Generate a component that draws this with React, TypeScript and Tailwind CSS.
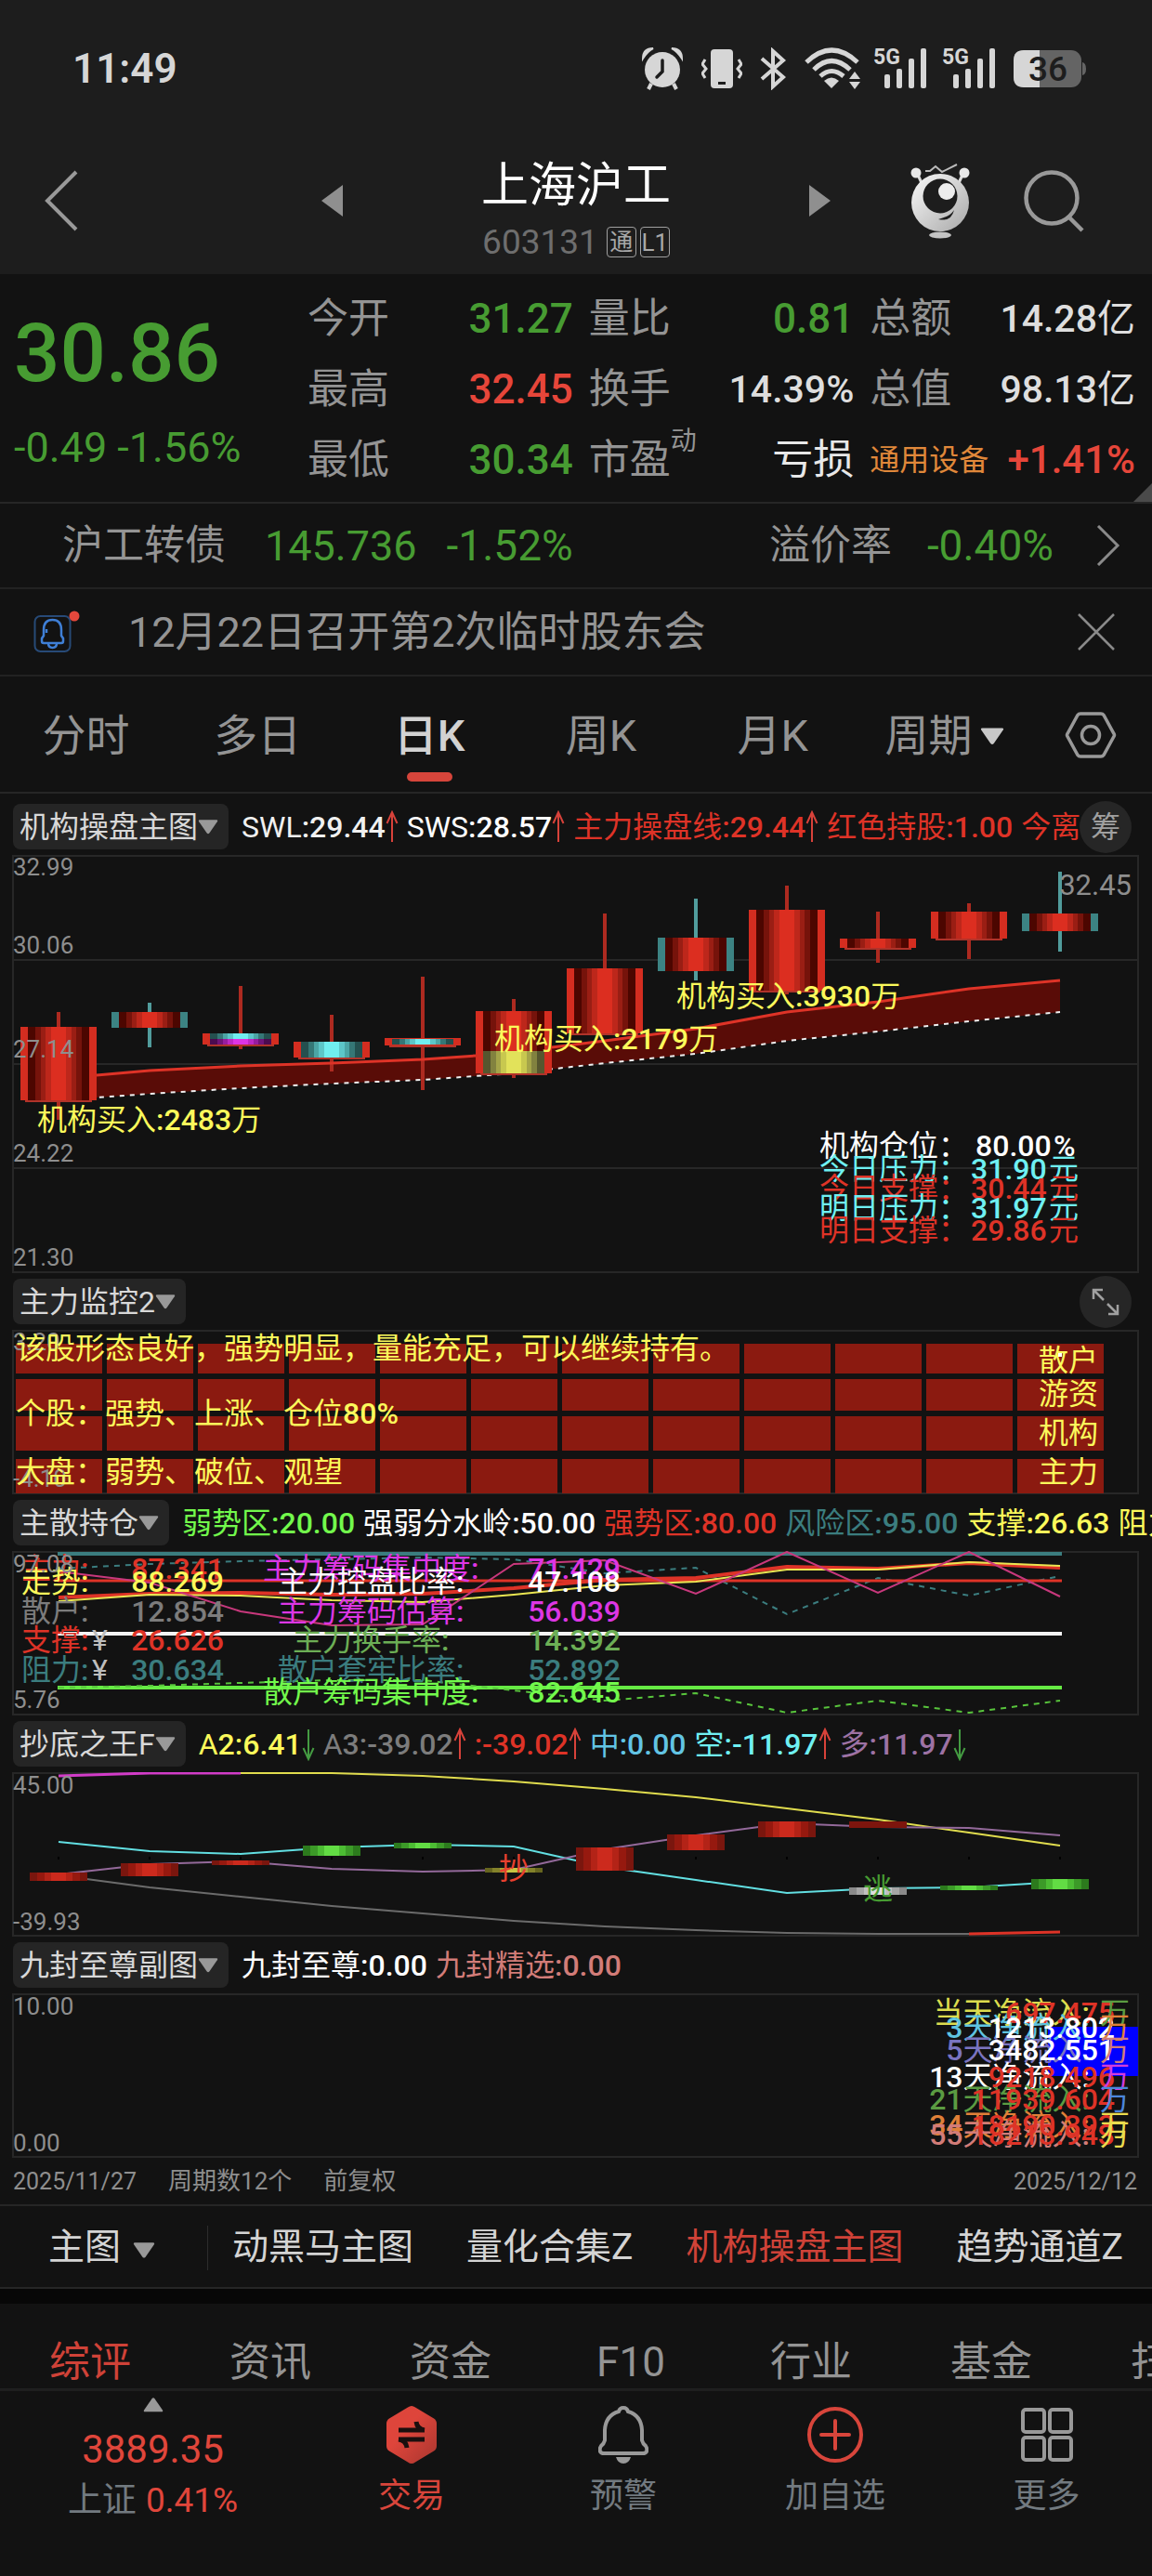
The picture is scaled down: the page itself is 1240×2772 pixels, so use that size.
import React from "react";

const GRAY = "#8e8e8e";
const RED = "#de3327";
const CYAN = "#6ff0f2";
const TEAL = "#3b7d7f";
const YELLOW = "#fbf95b";

const STEP = 98;
const colX = (i: number) => 63 + STEP * i;
const line = (ys: number[], from = 0) => ys.map((y, i) => `${colX(i + from)},${y}`).join(" ");
const split = (s: string) => s.split(/([0-9.:%-]+)/).filter(Boolean);
const isNumeric = (s: string) => /^[0-9.:%-]/.test(s);

function Triangle({ className, size = 22 }: { className?: string; size?: number }) {
  return (
    <svg width={size} height={(size * 3) / 4} viewBox="0 0 22 16" className={className} aria-hidden="true">
      <path d="M2 1h18q2 0 .8 2l-8.300 12q-1.500 1.800-3 0L1.200 3Q0 1 2 1z" fill="currentColor" />
    </svg>
  );
}

function Trend({ down = false }: { down?: boolean }) {
  return (
    <svg width="14" height="36" viewBox="0 0 14 36" className={down ? "rotate-180" : ""} aria-hidden="true">
      <path d="M7 2v32M1.500 14 7 2l5.500 12" fill="none" stroke={down ? "#449c42" : "#d8423a"} strokeWidth="2" />
    </svg>
  );
}

function StatusBar() {
  return (
    <div className="flex h-[148px] items-center justify-between pl-[78px] pr-[71px] text-[#d6d6d6]">
      <span className="text-[44px] font-semibold leading-none">11:49</span>
      <div className="flex items-center">
        <svg width="44" height="46" viewBox="0 0 44 46" fill="#d6d6d6" aria-label="闹钟">
          <path d="M1 12Q1 1 12 1Q6 4 1 12zM43 12Q43 1 32 1Q38 4 43 12z" stroke="#d6d6d6" strokeWidth="2" />
          <circle cx="22" cy="24" r="19" />
          <path d="M10 39 7 45M34 39l3 6" stroke="#d6d6d6" strokeWidth="4" />
          <path d="M22 14v12l-6 6" fill="none" stroke="#1d1d1d" strokeWidth="3.500" strokeLinecap="round" />
        </svg>
        <svg width="44" height="46" viewBox="0 0 44 46" className="ml-[20px]" fill="#d6d6d6" aria-label="振动">
          <rect x="10" y="2" width="24" height="42" rx="4" />
          <rect x="18" y="37" width="8" height="3" fill="#1d1d1d" />
          <path d="M4 13 1 18l4 5-4 5 3 5M40 13l3 5-4 5 4 5-3 5" fill="none" stroke="#d6d6d6" strokeWidth="3" />
        </svg>
        <svg width="30" height="46" viewBox="0 0 30 46" className="ml-[18px]" fill="none" stroke="#d6d6d6" strokeWidth="4" aria-label="蓝牙">
          <path d="M3 12 26 32 15 42V4l11 10L3 34" />
        </svg>
        <svg width="62" height="46" viewBox="0 0 62 46" className="ml-[18px]" aria-label="无线网络">
          <g fill="none" stroke="#d6d6d6" strokeWidth="5">
            <path d="M3 16Q30-10 58 16" />
            <path d="M11 24Q30 5 50 24" />
            <path d="M18 31Q30 20 43 31" />
          </g>
          <path d="M22 36q8-7 16 0l-8 8z" fill="#d6d6d6" />
          <path d="M49 34l6-8 6 8zM49 37l6 8 6-8z" fill="#d6d6d6" />
        </svg>
        {[0, 1].map((k) => (
          <svg key={k} width="60" height="46" viewBox="0 0 60 46" className="ml-[14px] overflow-visible" fill="#d6d6d6" aria-label="5G 信号">
            <text x="-1" y="18" fontSize="23" fontWeight="700">5G</text>
            <rect x="11" y="29" width="6" height="15" rx="2" />
            <rect x="24" y="23" width="6" height="21" rx="2" />
            <rect x="37" y="12" width="6" height="32" rx="2" />
            <rect x="50" y="1" width="6" height="43" rx="2" />
          </svg>
        ))}
        <svg width="78" height="42" viewBox="0 0 78 42" className="ml-[16px]" aria-label="电量 36%">
          <rect x="0" y="1" width="73" height="40" rx="11" fill="#646464" />
          <path d="M11 1h17v40H11Q0 41 0 30V12Q0 1 11 1z" fill="#d6d6d6" />
          <path d="M74 14q4 1 4 7t-4 7z" fill="#646464" />
          <text x="37" y="34" fontSize="37" fontWeight="500" textAnchor="middle" fill="#1d1d1d">36</text>
        </svg>
      </div>
    </div>
  );
}

function TitleBar() {
  return (
    <div className="flex h-[147px] items-center pb-[12px]">
      <div className="flex-1">
        <button aria-label="返回" className="ml-[46px] block">
          <svg width="40" height="68" viewBox="0 0 40 68" fill="none" stroke="#999" strokeWidth="4">
            <path d="M36 3 5 34l31 31" />
          </svg>
        </button>
      </div>
      <div className="flex w-[548px] items-center justify-between">
        <button aria-label="上一只" className="text-[#8f8f8f]">
          <svg width="23" height="34" viewBox="0 0 23 34"><path d="M23 0v34L0 17z" fill="currentColor" /></svg>
        </button>
        <div className="flex flex-col items-center gap-[20px] pt-[22px]">
          <h1 className="text-[51px] font-normal leading-[48px] text-white">上海沪工</h1>
          <div className="flex items-center text-[#6e6e6e]">
            <span className="text-[37px] leading-[34px]">603131</span>
            <span className="ml-[9px] flex h-[33px] w-[32px] items-center justify-center rounded-sm border border-[#a0a0a0] text-[25px] leading-none text-[#a8a8a8]">通</span>
            <span className="ml-[4px] flex h-[33px] w-[32px] items-center justify-center rounded-sm border border-[#a0a0a0] text-[26px] leading-none text-[#a8a8a8]">L1</span>
          </div>
        </div>
        <button aria-label="下一只" className="text-[#8f8f8f]">
          <svg width="23" height="34" viewBox="0 0 23 34"><path d="M0 0v34l23-17z" fill="currentColor" /></svg>
        </button>
      </div>
      <div className="flex flex-1 items-center justify-end gap-[56px]">
        <button aria-label="智能助手">
          <svg width="66" height="82" viewBox="0 0 66 82">
            <defs>
              <linearGradient id="bot" x1="0" y1="0" x2="1" y2="1">
                <stop offset="0" stopColor="#fafafa" />
                <stop offset="1" stopColor="#a8a8a8" />
              </linearGradient>
            </defs>
            <path d="M8 11l6 13M58 11l-6 13" stroke="#ddd" strokeWidth="3" />
            <circle cx="7" cy="11" r="5.500" fill="#e8e8e8" />
            <circle cx="59" cy="11" r="5.500" fill="#e8e8e8" />
            <path d="M17 9h5l6-5 7 6L51 2" fill="none" stroke="#bbb" strokeWidth="2" />
            <circle cx="33" cy="43" r="31" fill="url(#bot)" />
            <circle cx="33" cy="36" r="18.500" fill="#1d1d1d" />
            <circle cx="40" cy="31" r="9" fill="#ececec" />
            <path d="M31 61q14 3 17-10-4 6-11 8z" fill="#1d1d1d" />
            <ellipse cx="33" cy="78" rx="12" ry="3.500" fill="#c4c4c4" />
          </svg>
        </button>
        <button aria-label="搜索" className="mr-[73px]">
          <svg width="66" height="68" viewBox="0 0 66 68" fill="none" stroke="#999" strokeWidth="4.500">
            <circle cx="31" cy="31" r="27.500" />
            <path d="M49 51l15 15" />
          </svg>
        </button>
      </div>
    </div>
  );
}

function Quote({ label, sup, value, className }: { label: string; sup?: string; value: string; className: string }) {
  return (
    <div className="flex items-center justify-between leading-none">
      <dt className="flex items-start text-[44px] text-[#949494]">
        {label}
        {sup && <span className="-mt-3 text-[28px] leading-none">{sup}</span>}
      </dt>
      <dd className={className}>
        {split(value).map((s, i) => <span key={i} className={isNumeric(s) ? "font-medium" : "font-normal"}>{s}</span>)}
      </dd>
    </div>
  );
}

function QuotePanel() {
  const green = "text-[44px] text-[#479c32]";
  const white = "text-[41px] text-[#dedede]";
  return (
    <section className="relative flex border-b-2 border-[#262626] pb-[7px] pt-[10px]">
      <div className="flex w-[331px] shrink-0 flex-col pl-[15px] text-[#479c32]">
        <div className="mt-[33px] text-[87px] font-medium leading-[84px]">30.86</div>
        <div className="mt-[38px] whitespace-nowrap text-[45px] leading-[44px]">-0.49 -1.56%</div>
      </div>
      <dl className="mr-[18px] grid flex-1 auto-rows-[76px] grid-cols-3 gap-x-[17px]">
        <Quote label="今开" value="31.27" className={green} />
        <Quote label="量比" value="0.81" className={green} />
        <Quote label="总额" value="14.28亿" className={white} />
        <Quote label="最高" value="32.45" className="text-[44px] text-[#e6463a]" />
        <Quote label="换手" value="14.39%" className={white} />
        <Quote label="总值" value="98.13亿" className={white} />
        <Quote label="最低" value="30.34" className={green} />
        <Quote label="市盈" sup="动" value="亏损" className="text-[44px] text-[#e8e8e8]" />
        <div className="flex items-center justify-between leading-none">
          <dt className="text-[32px] text-[#e0883a]">通用设备</dt>
          <dd className="text-[42px] font-medium text-[#e6463a]">+1.41%</dd>
        </div>
      </dl>
      <svg width="20" height="20" viewBox="0 0 20 20" className="absolute bottom-0 right-0" aria-hidden="true">
        <path d="M20 0v20H0z" fill="#4a4a4a" />
      </svg>
    </section>
  );
}

function InfoRows() {
  return (
    <>
      <a href="#bond" className="flex h-[92px] items-center border-b-2 border-[#222] pl-[67px] pr-[34px] text-[44px] leading-none text-[#949494]">
        <span>沪工转债</span>
        <span className="ml-[42px] text-[45px] text-[#479c32]">145.736</span>
        <span className="ml-[32px] text-[46px] text-[#479c32]">-1.52%</span>
        <span className="ml-auto">溢价率</span>
        <span className="ml-[38px] text-[46px] text-[#479c32]">-0.40%</span>
        <svg width="26" height="44" viewBox="0 0 26 44" fill="none" stroke="#8a8a8a" strokeWidth="3" className="ml-[46px]" aria-hidden="true">
          <path d="M2 1l21 21L2 43" />
        </svg>
      </a>
      <div className="flex h-[94px] items-center border-b-2 border-[#222] pl-[36px] pr-[40px]">
        <svg width="52" height="46" viewBox="0 0 52 46" fill="none" aria-hidden="true">
          <rect x="1.500" y="6" width="38" height="38" rx="6" stroke="#274a77" strokeWidth="2" />
          <g stroke="#3f7fd6" strokeWidth="2.500">
            <path d="M9 33v-3l2-3V21q0-11 9.500-11T30 21v6l2 3v3q0 2-2 2H11q-2 0-2-2z" />
            <path d="M14 24v-4M16 35q0 5 4.500 5t4.500-5" />
          </g>
          <circle cx="44" cy="6" r="5.500" fill="#e5483c" />
        </svg>
        <span className="ml-[50px] text-[45px] leading-none text-[#949494]">12月22日召开第2次临时股东会</span>
        <button aria-label="关闭" className="ml-auto">
          <svg width="40" height="42" viewBox="0 0 40 42" stroke="#8a8a8a" strokeWidth="2.500"><path d="M1 2l38 38M39 2 1 40" /></svg>
        </button>
      </div>
    </>
  );
}

function PeriodTabs() {
  const tabs = ["分时", "多日", "日K", "周K", "月K", "周期"];
  return (
    <nav className="flex h-[126px] border-b-2 border-[#262626] text-[47px] leading-none">
      {tabs.map((t) => (
        <button
          key={t}
          className={
            t === "日K"
              ? "flex flex-1 flex-col items-center pt-[37px] text-[#d2d2d2] font-medium"
              : "flex flex-1 flex-col items-center pt-[37px] text-[#949494]"
          }
        >
          <span className="flex items-center whitespace-nowrap leading-[54px]">
            {t}
            {t === "周期" && <Triangle size={26} className="ml-[8px] text-[#c8c8c8]" />}
          </span>
          {t === "日K" && <span className="mt-[12px] h-[10px] w-[49px] rounded-full bg-[#d6453b]" />}
        </button>
      ))}
      <button aria-label="设置" className="flex w-[131px] justify-center pt-[38px]">
        <svg width="56" height="50" viewBox="0 0 56 50" fill="none" stroke="#999" strokeWidth="3.500">
          <path d="M17 2h22q2 0 3 1.500l11 20q1 1.500 0 3l-11 20Q41 48 39 48H17q-2 0-3-1.500l-11-20q-1-1.500 0-3l11-20Q15 2 17 2z" />
          <circle cx="28" cy="25" r="9.500" />
        </svg>
      </button>
    </nav>
  );
}

type Item = { text: string; color: string; trend?: "up" | "down" };

function PanelHeader({ name, items = [], children }: { name: string; items?: Item[]; children?: React.ReactNode }) {
  return (
    <div className="flex h-[61px] items-center pl-[14px] text-[32px] leading-none">
      <button className="flex h-[49px] shrink-0 items-center rounded-lg bg-[#252525] pl-[7px] pr-[11px] text-[#d8d8d8]">
        {name}
        <Triangle className="text-[#999]" />
      </button>
      <div className="ml-[14px] flex flex-1 items-center gap-[9px] overflow-hidden whitespace-nowrap">
        {items.map((it, i) => (
          <span key={i} className="flex shrink-0 items-center" style={{ color: it.color }}>
            <span>
              {split(it.text).map((s, k) => <span key={k} className={isNumeric(s) ? "font-medium" : "font-normal"}>{s}</span>)}
            </span>
            {it.trend && <Trend down={it.trend === "down"} />}
          </span>
        ))}
      </div>
      {children}
    </div>
  );
}

function Frame({ top, height, label, children }: { top: number; height: number; label: string; children: React.ReactNode }) {
  return (
    <svg viewBox={`0 ${top} 1240 ${height}`} className="block w-full" role="img" aria-label={label}>
      <rect x="14" y={top + 1} width="1211" height={height - 2} fill="none" stroke="#272727" strokeWidth="2" />
      {children}
    </svg>
  );
}

function Txt({ x, y, c, size = 32, anchor = "start", children }: { x: number; y: number; c: string; size?: number; anchor?: "start" | "middle" | "end"; children: string }) {
  return (
    <text x={x} y={y} fill={c} fontSize={size} textAnchor={anchor}>
      {split(children).map((s, i) => <tspan key={i} fontWeight={isNumeric(s) && size === 32 ? 500 : 400}>{s}</tspan>)}
    </text>
  );
}

const PALETTES: Record<string, string[]> = {
  red: ["#4c0600", "#76130b", "#9a1e14", "#bd271b", "#dc2e20"],
  cyan: ["#24504f", "#357776", "#4ba5a5", "#5cc6c8", "#70eef0"],
  magenta: ["#4b0b50", "#701478", "#971d9f", "#be28c5", "#de34e4"],
  yellow: ["#56562e", "#82823f", "#a5a549", "#c8c84f", "#e2e25a"],
};
const HALF = [33, 25, 19, 14, 8];

function Shade({ x, y1, y2, tone }: { x: number; y1: number; y2: number; tone: string }) {
  return (
    <>
      {PALETTES[tone].map((c, i) => (
        <rect key={i} x={x - HALF[i]} y={y1} width={HALF[i] * 2} height={y2 - y1} fill={c} />
      ))}
    </>
  );
}

type Candle = { hi: number; top: number; bot: number; lo: number; edge: "r" | "c"; parts?: [string, number, number][] };
const CANDLES: Candle[] = [
  { hi: 1089, top: 1105, bot: 1184, lo: 1205, edge: "r" },
  { hi: 1079, top: 1089, bot: 1106, lo: 1127, edge: "c" },
  { hi: 1061, top: 1112, bot: 1124, lo: 1129, edge: "r", parts: [["cyan", 1112, 1118], ["magenta", 1118, 1124]] },
  { hi: 1092, top: 1121, bot: 1138, lo: 1153, edge: "r", parts: [["cyan", 1121, 1138]] },
  { hi: 1051, top: 1117, bot: 1125, lo: 1173, edge: "r", parts: [["cyan", 1118, 1124]] },
  { hi: 1075, top: 1088, bot: 1155, lo: 1160, edge: "r", parts: [["red", 1088, 1131], ["yellow", 1131, 1155]] },
  { hi: 983, top: 1042, bot: 1112, lo: 1114, edge: "r" },
  { hi: 967, top: 1009, bot: 1045, lo: 1055, edge: "c" },
  { hi: 953, top: 979, bot: 1066, lo: 1070, edge: "r" },
  { hi: 981, top: 1010, bot: 1020, lo: 1036, edge: "r" },
  { hi: 972, top: 981, bot: 1010, lo: 1032, edge: "r" },
  { hi: 938, top: 983, bot: 1002, lo: 1024, edge: "c" },
];
const BAND_TOP = [1160, 1152, 1147, 1144, 1140, 1133, 1120, 1107, 1089, 1078, 1064, 1055];
const BAND_BOT = [1184, 1177, 1171, 1166, 1162, 1155, 1144, 1134, 1120, 1110, 1099, 1089];

function MainChart() {
  const notes: [string, string, number, number, string, string, number][] = [
    ["机构仓位：", "#ffffff", 1244, 1050, "80.00", "%", 1134],
    ["今日压力：", CYAN, 1269, 1045, "31.90", "元", 1129],
    ["今日支撑：", RED, 1290, 1045, "30.44", "元", 1129],
    ["明日压力：", CYAN, 1311, 1045, "31.97", "元", 1129],
    ["明日支撑：", RED, 1335, 1045, "29.86", "元", 1129],
  ];
  return (
    <Frame top={920} height={450} label="日K线图">
      {[1033, 1145, 1257].map((y) => (
        <path key={y} d={`M14 ${y}H1225`} stroke="#272727" strokeWidth="2" />
      ))}
      <polygon points={`${line(BAND_TOP)} ${BAND_BOT.map((y, i) => `${colX(i)},${y}`).reverse().join(" ")}`} fill="#590c07" />
      <polyline points={line(BAND_BOT)} fill="none" stroke="#f0f0f0" strokeWidth="2" strokeDasharray="5 6" />
      {CANDLES.map((c, i) => {
        const x = colX(i);
        const e = c.edge === "r" ? "#d42d20" : "#3c8383";
        const w = c.edge === "r" ? "#ad2a20" : "#519c9c";
        return (
          <g key={i}>
            <rect x={x - 2} y={c.hi} width="4" height={c.lo - c.hi} fill={w} />
            <rect x={x - 41} y={c.top} width="82" height={c.bot - c.top} fill={e} />
            {(c.parts ?? [["red", c.top, c.bot]]).map(([tone, a, b], k) => (
              <Shade key={k} x={x} y1={a as number} y2={b as number} tone={tone as string} />
            ))}
            {c.edge === "r" && <rect x={x - 36} y={c.bot} width="72" height="2" fill="#b0332a" />}
          </g>
        );
      })}
      <polyline points={`${colX(0) + 41},1157 ${line(BAND_TOP.slice(1, 5), 1)} 512,1136`} fill="none" stroke={RED} strokeWidth="3" />
      <polyline points={`594,1127 ${line(BAND_TOP.slice(6), 6)}`} fill="none" stroke={RED} strokeWidth="3" />
      {([["32.99", 942], ["30.06", 1026], ["27.14", 1138], ["24.22", 1250], ["21.30", 1362]] as [string, number][]).map(([t, y]) => (
        <Txt key={t} x={14} y={y} c={GRAY} size={26}>{t}</Txt>
      ))}
      <Txt x={1218} y={963} c={GRAY} size={31} anchor="end">32.45</Txt>
      <Txt x={40} y={1216} c={YELLOW}>机构买入:2483万</Txt>
      <Txt x={532} y={1129} c={YELLOW}>机构买入:2179万</Txt>
      <Txt x={728} y={1083} c={YELLOW}>机构买入:3930万</Txt>
      {notes.map(([a, c, y, nx, n, u, ux]) => (
        <g key={a + y}>
          <Txt x={882} y={y} c={c}>{a}</Txt>
          <Txt x={nx} y={y} c={c}>{n}</Txt>
          <Txt x={ux} y={y} c={c}>{u}</Txt>
        </g>
      ))}
    </Frame>
  );
}

function MonitorChart() {
  const rows: [number, number][] = [[1446, 32], [1484, 34], [1524, 37], [1570, 37]];
  return (
    <Frame top={1431} height={177} label="主力监控">
      {rows.map(([y, h]) => Array.from({ length: 12 }, (_, i) => <rect key={`${y}-${i}`} x={17 + i * STEP} y={y} width="93" height={h} fill="#8b1a10" />))}
      <Txt x={14} y={1453} c={GRAY} size={26}>3.20</Txt>
      <Txt x={14} y={1600} c={GRAY} size={26}>-4.10</Txt>
      <Txt x={17} y={1462} c={YELLOW}>该股形态良好，强势明显，量能充足，可以继续持有。</Txt>
      <Txt x={17} y={1532} c={YELLOW}>个股：强势、上涨、仓位80%</Txt>
      <Txt x={17} y={1595} c={YELLOW}>大盘：弱势、破位、观望</Txt>
      <Txt x={1118} y={1475} c={YELLOW}>散户</Txt>
      <Txt x={1118} y={1511} c={YELLOW}>游资</Txt>
      <Txt x={1118} y={1553} c={YELLOW}>机构</Txt>
      <Txt x={1118} y={1595} c={YELLOW}>主力</Txt>
      <rect x="1139" y="1456" width="4" height="4" fill="#fff" />
    </Frame>
  );
}

function HoldingChart() {
  const left: [string, string, number, string, string][] = [
    ["主力:", RED, 1699, "87.341", ""],
    ["走势:", YELLOW, 1713, "88.269", ""],
    ["散户:", "#7c7c7c", 1745, "12.854", ""],
    ["支撑:", RED, 1776, "26.626", "¥"],
    ["阻力:", TEAL, 1808, "30.634", "¥"],
  ];
  const right: [string, string, number, string, number][] = [
    ["主力筹码集中度:", "#dd36e4", 1699, "71.429", 283],
    ["主力控盘比率:", "#ffffff", 1713, "47.108", 299],
    ["主力筹码估算:", "#dd36e4", 1745, "56.039", 299],
    ["主力换手率:", "#6cae55", 1776, "14.392", 315],
    ["散户套牢比率:", TEAL, 1808, "52.892", 299],
    ["散户筹码集中度:", "#72f94c", 1832, "82.645", 283],
  ];
  return (
    <Frame top={1669} height={177} label="主散持仓">
      <g fill="none">
        <path d="M62 1672H1143" stroke={TEAL} strokeWidth="4" />
        <polyline points={line([1688, 1683, 1680, 1678, 1676, 1678, 1693, 1687, 1737, 1698, 1717, 1696])} stroke={TEAL} strokeWidth="2" strokeDasharray="6 6" />
        <path d="M62 1701H1143" stroke={RED} strokeWidth="3" />
        <polyline points={line([1719, 1715, 1714, 1716, 1715, 1709, 1700, 1698, 1686, 1688, 1682, 1687])} stroke={RED} strokeWidth="4" />
        <polyline points={line([1723, 1716, 1717, 1722, 1724, 1716, 1706, 1702, 1689, 1689, 1681, 1685])} stroke="#eae652" strokeWidth="2" />
        <polyline points={line([1691, 1703, 1734, 1749, 1748, 1683, 1679, 1715, 1670, 1714, 1670, 1718])} stroke="#c8387c" strokeWidth="2" />
        <path d="M62 1758H1143" stroke="#f4f4f4" strokeWidth="4" />
        <path d="M62 1816H1143" stroke="#66ea44" strokeWidth="4" />
        <polyline points={line([1816, 1814, 1811, 1808, 1808, 1819, 1830, 1822, 1843, 1830, 1843, 1830])} stroke="#58c43c" strokeWidth="2" strokeDasharray="6 6" />
      </g>
      {left.map(([a, c, y, v, u]) => (
        <g key={a + y}>
          <Txt x={23} y={y} c={c}>{a}</Txt>
          {u && <Txt x={99} y={y} c="#bdbdbd">{u}</Txt>}
          <Txt x={241} y={y} c={c} anchor="end">{v}</Txt>
        </g>
      ))}
      {right.map(([a, c, y, v, x]) => (
        <g key={a + y}>
          <Txt x={x} y={y} c={c}>{a}</Txt>
          <Txt x={668} y={y} c={c} anchor="end">{v}</Txt>
        </g>
      ))}
      <Txt x={14} y={1692} c={GRAY} size={26}>97.08</Txt>
      <Txt x={14} y={1838} c={GRAY} size={26}>5.76</Txt>
    </Frame>
  );
}

const BAR_TONES: Record<string, string[]> = {
  red: ["#7a160e", "#96190f", "#b32317", "#cc2a1d"],
  green: ["#2c7a1d", "#3c9a28", "#4cbc33", "#62dc44"],
  olive: ["#66651f", "#83822a", "#a5a336", "#c6c443"],
  gray: ["#8a8a8a", "#a5a5a5", "#c0c0c0", "#dedede"],
  flat: ["#7d150d", "#7d150d", "#7d150d", "#7d150d"],
};
const BARS: [number, number, number, string][] = [
  [0, 2015, 2024, "red"], [1, 2005, 2019, "red"], [2, 2002, 2007, "red"], [3, 1986, 1997, "green"],
  [4, 1983, 1989, "green"], [5, 2010, 2015, "olive"], [6, 1988, 2013, "red"], [7, 1974, 1991, "red"],
  [8, 1960, 1977, "red"], [9, 1960, 1967, "flat"], [9, 2031, 2039, "gray"], [10, 2029, 2034, "green"], [11, 2022, 2033, "green"],
];

function BottomFishingChart() {
  return (
    <Frame top={1907} height={177} label="抄底之王">
      <g fill="none" strokeWidth="2">
        <polyline points={line([2018, 2031, 2041, 2051, 2059, 2067, 2073, 2077, 2080, 2081, 2081])} stroke="#6b6b6b" />
        <polyline points={line([2081, 2079], 10)} stroke={RED} strokeWidth="3" />
        <polyline points={line([1911, 1908, 1908])} stroke="#d23cc8" strokeWidth="3" />
        <polyline points={line([1908, 1908, 1911, 1917, 1925, 1934, 1946, 1958, 1972, 1986], 2)} stroke="#e0dc4e" />
        <polyline points={line([1982, 1992, 1995, 1988, 1985, 1987, 2009, 2023, 2037, 2032, 2031, 2025])} stroke="#62dfe2" />
        <polyline points={line([2017, 2006, 2003, 2011, 2014, 2012, 1990, 1975, 1962, 1966, 1967, 1975])} stroke="#93699a" />
      </g>
      {CANDLES.map((_, i) => <rect key={i} x={colX(i) - 1} y="1998" width="2" height="3" fill="#000" />)}
      {BARS.map(([i, a, b, tone]) =>
        [31, 23, 15, 8].map((h, k) => <rect key={`${i}-${a}-${k}`} x={colX(i) - h} y={a} width={h * 2} height={b - a} fill={BAR_TONES[tone][k]} />),
      )}
      <Txt x={553} y={2022} c="#e8402f" anchor="middle">抄</Txt>
      <Txt x={945} y={2044} c="#479c32" anchor="middle">逃</Txt>
      <Txt x={14} y={1930} c={GRAY} size={26}>45.00</Txt>
      <Txt x={14} y={2077} c={GRAY} size={26}>-39.93</Txt>
    </Frame>
  );
}

function FlowChart() {
  const rows: [string, string, number, string, string, string][] = [
    ["当天净流入:", "#dcdc4e", 2177, "697.475", RED, "#5b9c42"],
    ["3天净流入:", "#5fc4e0", 2193, "1213.802", "#ffffff", "#e08038"],
    ["5天净流入:", "#7a74c0", 2217, "3482.551", "#ffffff", "#d27c78"],
    ["13天净流入:", "#ffffff", 2246, "9218.496", RED, "#d23cdc"],
    ["21天净流入:", "#5b9c42", 2270, "11939.604", RED, "#4c86dc"],
    ["34天净流入:", "#e08038", 2298, "18190.393", RED, "#eadc4e"],
    ["55天净流入:", "#d27c78", 2308, "18213.943", RED, "#eadc4e"],
  ];
  return (
    <Frame top={2145} height={177} label="九封至尊">
      <rect x="1128" y="2181" width="97" height="53" fill="#0000ff" />
      {rows.map(([a, c, y]) => <Txt key={a} x={1173} y={y} c={c} anchor="end">{a}</Txt>)}
      {rows.map(([a, , y, v, vc]) => <Txt key={a} x={1200} y={y} c={vc} anchor="end">{v}</Txt>)}
      {rows.map(([a, , y, , , u]) => <Txt key={a} x={1184} y={y} c={u}>万</Txt>)}
      <Txt x={14} y={2168} c={GRAY} size={26}>10.00</Txt>
      <Txt x={14} y={2315} c={GRAY} size={26}>0.00</Txt>
    </Frame>
  );
}

function Charts() {
  return (
    <main>
      <div className="pt-[5px]">
        <PanelHeader
          name="机构操盘主图"
          items={[
            { text: "SWL:29.44", color: "#f0f0f0", trend: "up" },
            { text: "SWS:28.57", color: "#ffffff", trend: "up" },
            { text: "主力操盘线:29.44", color: RED, trend: "up" },
            { text: "红色持股:1.00", color: RED },
            { text: "今离场:0.00", color: RED },
          ]}
        >
          <button className="mr-[22px] flex size-[56px] shrink-0 items-center justify-center rounded-full bg-[#262626] text-[32px] text-[#a0a0a0]">筹</button>
        </PanelHeader>
      </div>
      <MainChart />
      <PanelHeader name="主力监控2">
        <button aria-label="展开" className="mr-[22px] flex size-[56px] shrink-0 items-center justify-center rounded-full bg-[#262626]">
          <svg width="30" height="30" viewBox="0 0 30 30" fill="none" stroke="#a0a0a0" strokeWidth="2.500">
            <path d="M2 12V2h10M2 2l11 11M28 18v10H18M28 28 17 17" />
          </svg>
        </button>
      </PanelHeader>
      <MonitorChart />
      <PanelHeader
        name="主散持仓"
        items={[
          { text: "弱势区:20.00", color: "#72f94c" },
          { text: "强弱分水岭:50.00", color: "#ffffff" },
          { text: "强势区:80.00", color: RED },
          { text: "风险区:95.00", color: TEAL },
          { text: "支撑:26.63", color: YELLOW },
          { text: "阻力:30.63", color: YELLOW },
        ]}
      />
      <HoldingChart />
      <PanelHeader
        name="抄底之王F"
        items={[
          { text: "A2:6.41", color: YELLOW, trend: "down" },
          { text: "A3:-39.02", color: "#7c7c7c", trend: "up" },
          { text: ":-39.02", color: RED, trend: "up" },
          { text: "中:0.00", color: "#62c4e4" },
          { text: "空:-11.97", color: CYAN, trend: "up" },
          { text: "多:11.97", color: "#9d72a4", trend: "down" },
        ]}
      />
      <BottomFishingChart />
      <PanelHeader
        name="九封至尊副图"
        items={[
          { text: "九封至尊:0.00", color: "#ffffff" },
          { text: "九封精选:0.00", color: "#d27c78" },
        ]}
      />
      <FlowChart />
      <div className="flex h-[50px] items-center pl-[14px] pr-[16px] text-[26px] leading-none text-[#8e8e8e]">
        <span className="text-[25px]">2025/11/27</span>
        <span className="ml-[34px]">周期数12个</span>
        <span className="ml-[34px]">前复权</span>
        <span className="ml-auto text-[25px]">2025/12/12</span>
      </div>
    </main>
  );
}

function TemplateBar() {
  return (
    <div className="flex h-[91px] items-center overflow-hidden whitespace-nowrap border-y-2 border-[#262626] pt-[2px] text-[39px] leading-none text-[#d4d4d4]">
      <button className="flex h-[48px] w-[224px] shrink-0 items-center border-r border-[#2c2c2c] pl-[52px]">
        主图
        <Triangle size={24} className="ml-[13px] mt-1 text-[#999]" />
      </button>
      <div className="ml-[26px] flex gap-[57px]">
        <button>动黑马主图</button>
        <button>量化合集Z</button>
        <button className="text-[#cf4238]">机构操盘主图</button>
        <button>趋势通道Z</button>
      </div>
    </div>
  );
}

function SectionTabs() {
  const tabs = ["综评", "资讯", "资金", "F10", "行业", "基金", "扫雷"];
  return (
    <nav className="flex h-[94px] overflow-hidden border-b-[3px] border-[#1f1f1f] pt-[35px] text-[44px] leading-[46px]">
      {tabs.map((t, i) => (
        <button key={t} className={i === 0 ? "w-[194px] shrink-0 text-[#cf4238]" : "w-[194px] shrink-0 text-[#949494]"}>{t}</button>
      ))}
    </nav>
  );
}

function NavButton({ label, active, children }: { label: string; active?: boolean; children: React.ReactNode }) {
  return (
    <button className="flex flex-col items-center pt-[13px]">
      <span className="flex h-[68px] items-center">{children}</span>
      <span className={active ? "mt-[14px] text-[36px] leading-[36px] text-[#d8453b]" : "mt-[14px] text-[36px] leading-[36px] text-[#727a80]"}>{label}</span>
    </button>
  );
}

function BottomNav() {
  return (
    <nav className="grid h-[199px] grid-cols-[329fr_228fr_228fr_228fr_227fr]">
      <button className="flex flex-col items-center text-[#e0463b]">
        <Triangle className="mt-[7px] rotate-180 text-[#999]" />
        <span className="mt-[17px] text-[42px] leading-[44px]">3889.35</span>
        <span className="mt-[13px] flex items-center gap-[10px] text-[37px] leading-[40px]">
          <span className="text-[#727a80]">上证</span>0.41%
        </span>
      </button>
      <NavButton label="交易" active>
        <svg width="56" height="64" viewBox="0 0 56 64">
          <defs>
            <linearGradient id="trade" x1="0" y1="0" x2="1" y2="1">
              <stop offset="0.400" stopColor="#de453b" />
              <stop offset="1" stopColor="#a8362f" />
            </linearGradient>
          </defs>
          <path d="M24 2.500q4-3 8 0l20 12q3 2 3 5.500v24q0 3.500-3 5.500l-20 12q-4 3-8 0l-20-12q-3-2-3-5.500V20q0-3.500 3-5.500z" fill="url(#trade)" />
          <path d="M14 27h28M33 18q1 8 9 9M42 37H14M23 46q-1-8-9-9" fill="none" stroke="#1a0f0e" strokeWidth="5" />
        </svg>
      </NavButton>
      <NavButton label="预警">
        <svg width="54" height="64" viewBox="0 0 54 64" fill="none" stroke="#999" strokeWidth="4">
          <path d="M27 3q4 0 5 4 14 4 15 20v11q1 4 4 6 2 3 1 6-1 2-4 2H6q-3 0-4-2-1-3 1-6 3-2 4-6V27Q8 11 22 7q1-4 5-4z" />
          <path d="M19 56h16q-2 7-8 7t-8-7z" fill="#999" stroke="none" />
        </svg>
      </NavButton>
      <NavButton label="加自选">
        <svg width="62" height="62" viewBox="0 0 62 62" fill="none" stroke="#d8453b" strokeWidth="4">
          <circle cx="31" cy="31" r="28" />
          <path d="M31 16v30M16 31h30" strokeLinecap="round" />
        </svg>
      </NavButton>
      <NavButton label="更多">
        <svg width="56" height="58" viewBox="0 0 56 58" fill="none" stroke="#999" strokeWidth="4">
          {[[2, 2], [31, 2], [2, 32], [31, 32]].map(([x, y]) => <rect key={`${x}-${y}`} x={x} y={y} width="23" height="24" rx="3" />)}
        </svg>
      </NavButton>
    </nav>
  );
}

export default function App() {
  return (
    <div className="w-full overflow-hidden bg-[#121212] font-['Roboto','Noto_Sans_CJK_SC',sans-serif]">
      <header className="bg-[#1d1d1d]">
        <StatusBar />
        <TitleBar />
      </header>
      <QuotePanel />
      <InfoRows />
      <PeriodTabs />
      <Charts />
      <TemplateBar />
      <div className="h-[16px] bg-[#070707]" />
      <SectionTabs />
      <BottomNav />
    </div>
  );
}
